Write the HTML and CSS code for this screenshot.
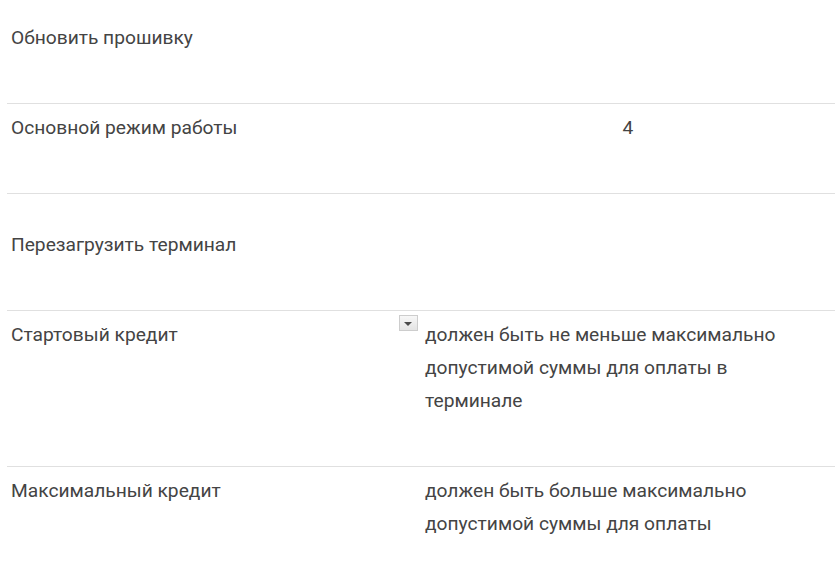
FILE: index.html
```html
<!DOCTYPE html>
<html lang="ru">
<head>
  <meta charset="UTF-8"/>
  <title>Настройки терминала</title>
  <link rel="stylesheet" href="styles.css">
</head>
<body>

<div class="settings">
  <div class="row">
    <div class="label">Обновить прошивку</div>
    <div class="value"></div>
  </div>

  <div class="row">
    <div class="label">Основной режим работы</div>
    <div class="value center">4</div>
  </div>

  <div class="row reboot">
    <div class="label">Перезагрузить терминал</div>
    <div class="value"></div>
  </div>

  <div class="row">
    <div class="label">Стартовый кредит</div>
    <div class="value">
      <span class="drop"></span>
      должен быть не меньше максимально допустимой суммы для оплаты в терминале
    </div>
  </div>

  <div class="row last">
    <div class="label">Максимальный кредит</div>
    <div class="value">должен быть больше максимально допустимой суммы для оплаты</div>
  </div>
</div>

</body>
</html>
```

FILE: styles.css
```css
body {
  margin: 0;
  padding: 14px 2px 0 7px;
  font-family: Roboto, "Liberation Sans", sans-serif;
  font-size: 19.2px;
  color: #444;
  background: #fff;
}
.settings {
  width: 828px;
}
.row {
  display: grid;
  grid-template-columns: 414px 1fr;
  padding: 7px 0 49px;
  line-height: 33px;
  border-bottom: 1px solid #e0e0e0;
}
.row.reboot {
  padding-top: 34px;
}
.row.last {
  border-bottom: none;
}
.label {
  padding-left: 4px;
}
.value {
  position: relative;
  padding-left: 4px;
  padding-right: 40px;
}
.value.center {
  text-align: center;
  padding-left: 0;
  padding-right: 0;
}
.drop {
  position: absolute;
  left: -22px;
  top: -3px;
  width: 19px;
  height: 16px;
  box-sizing: border-box;
  border: 1px solid #cdcdcd;
  background: linear-gradient(#f7f7f7, #e4e4e4);
}
.drop::after {
  content: "";
  position: absolute;
  left: 4px;
  top: 6px;
  border-left: 4.5px solid transparent;
  border-right: 4.5px solid transparent;
  border-top: 4px solid #4a4a4a;
}
```
